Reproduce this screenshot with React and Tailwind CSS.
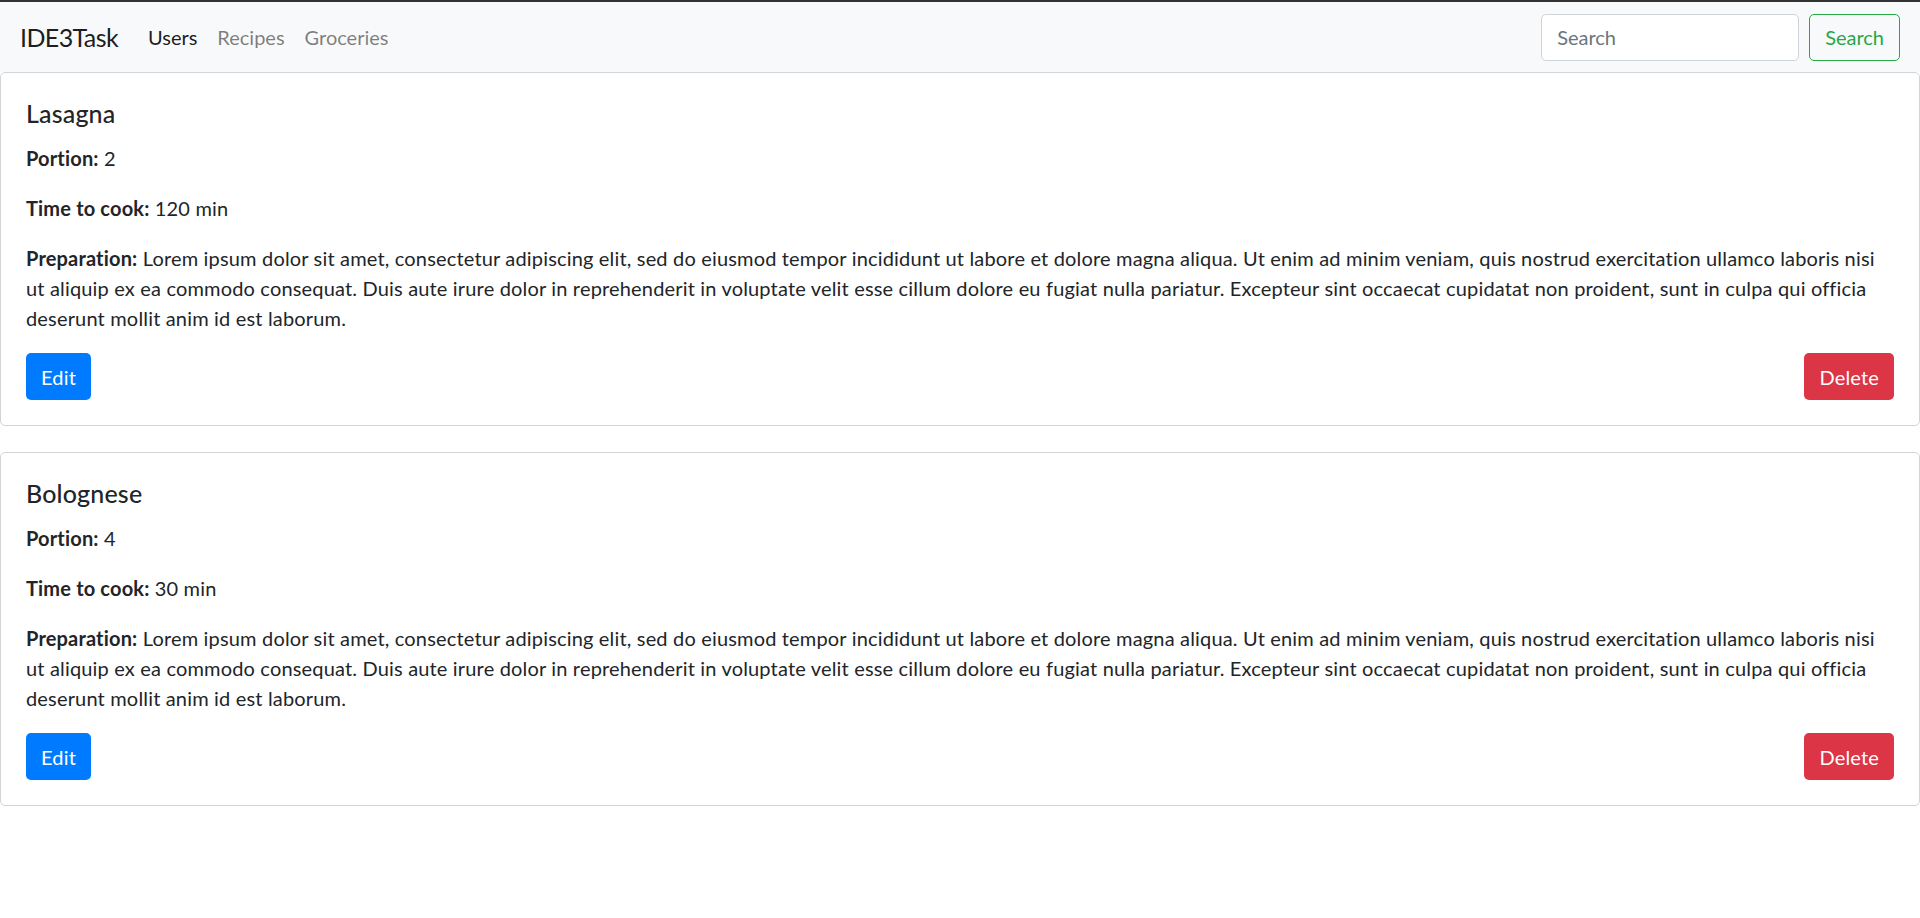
import React, { useState } from 'react';

const lorem =
  'Lorem ipsum dolor sit amet, consectetur adipiscing elit, sed do eiusmod tempor incididunt ut labore et dolore magna aliqua. Ut enim ad minim veniam, quis nostrud exercitation ullamco laboris nisi ut aliquip ex ea commodo consequat. Duis aute irure dolor in reprehenderit in voluptate velit esse cillum dolore eu fugiat nulla pariatur. Excepteur sint occaecat cupidatat non proident, sunt in culpa qui officia deserunt mollit anim id est laborum.';

const recipesStart = [
  { id: 1, name: 'Lasagna', portion: 2, time: 120, preparation: lorem },
  { id: 2, name: 'Bolognese', portion: 4, time: 30, preparation: lorem },
];

function RecipeCard({ recipe, onDelete }) {
  return (
    <div className="mb-[26px] rounded-[5px] border border-[#d3d4d5] bg-white">
      <div className="p-[25px] tracking-[0.17px]">
        <h5 className="mb-[15px] text-[25px] font-medium leading-[30px] text-[#212529]">{recipe.name}</h5>
        <p className="mb-5">
          <b>Portion:</b> {recipe.portion}
        </p>
        <p className="mb-5">
          <b>Time to cook:</b> {recipe.time} min
        </p>
        <p className="mb-5">
          <b>Preparation:</b> {recipe.preparation}
        </p>
        <div className="flex justify-between">
          <button className="h-[47px] rounded-[5px] bg-[#007bff] px-[15px] text-[20px] text-white">Edit</button>
          <button
            onClick={() => onDelete(recipe.id)}
            className="h-[47px] rounded-[5px] bg-[#dc3545] px-[15px] text-[20px] text-white"
          >
            Delete
          </button>
        </div>
      </div>
    </div>
  );
}

export default function App() {
  const [recipes, setRecipes] = useState(recipesStart);
  const [search, setSearch] = useState('');

  const handleDelete = (id) => {
    setRecipes(recipes.filter((r) => r.id !== id));
  };

  return (
    <div className="min-h-screen bg-white font-['Lato','Liberation_Sans',sans-serif] text-[20px] leading-[30px] text-[#212529]">
      <div className="h-[2px] bg-[#333]" />
      <nav className="flex h-[70px] items-center justify-between bg-[#f8f9fa] px-5">
        <div className="flex items-center">
          <a href="#" className="mr-5 text-[25px] leading-[38px] tracking-[-0.6px] text-[#000000e6]">IDE3Task</a>
          <a href="#" className="px-[10px] text-[#000000e6]">Users</a>
          <a href="#" className="px-[10px] text-[#00000080]">Recipes</a>
          <a href="#" className="px-[10px] text-[#00000080]">Groceries</a>
        </div>
        <form className="flex items-center" onSubmit={(e) => e.preventDefault()}>
          <input
            type="search"
            value={search}
            onChange={(e) => setSearch(e.target.value)}
            placeholder="Search"
            className="mr-[10px] h-[47px] w-[258px] rounded-[5px] border border-[#ced4da] bg-white px-[15px] text-[20px] text-[#495057] outline-none placeholder:text-[#6c757d]"
          />
          <button className="h-[47px] rounded-[5px] border border-[#28a745] px-[15px] text-[20px] text-[#28a745]">Search</button>
        </form>
      </nav>
      <div>
        {recipes.map((recipe) => (
          <RecipeCard key={recipe.id} recipe={recipe} onDelete={handleDelete} />
        ))}
      </div>
    </div>
  );
}
